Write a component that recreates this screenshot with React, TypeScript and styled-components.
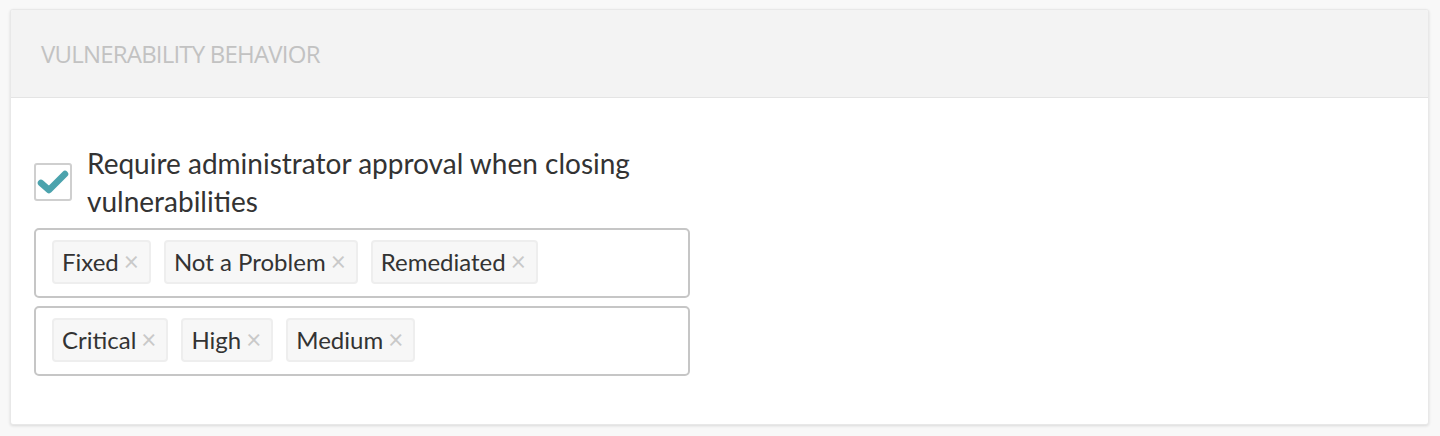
import React from "react";
import styled, { createGlobalStyle } from "styled-components";

const Global = createGlobalStyle`
  html, body { margin: 0; padding: 0; background: #f8f8f8; }
  body { font-family: Lato, "Open Sans", sans-serif; }
`;

const Page = styled.div`
  padding: 9px 11px 12px 10px;
`;

const Card = styled.section`
  background: #fff;
  border: 1px solid #e8e8e8;
  border-radius: 3px;
  box-shadow: 0 1px 3px rgba(0, 0, 0, 0.12);
  overflow: hidden;
`;

const Header = styled.header`
  height: 87px;
  background: #f3f3f3;
  border-bottom: 1px solid #e4e4e4;
  display: flex;
  align-items: center;
  padding-left: 30px;
`;

const Title = styled.h2`
  margin: 0;
  font-family: "Open Sans", Roboto, sans-serif;
  font-stretch: normal;
  font-weight: 400;
  font-size: 24px;
  color: #c2c2c2;
  letter-spacing: -0.8px;
`;

const Body = styled.div`
  padding: 46px 24px 48px 23px;
  width: 656px;
  display: flex;
  flex-direction: column;
  gap: 8px;
`;

const CheckRow = styled.label`
  display: flex;
  align-items: center;
  gap: 15px;
`;

const Box = styled.span`
  flex: none;
  width: 34px;
  height: 34px;
  border: 2px solid #cfcfcf;
  border-radius: 3px;
  display: flex;
  align-items: center;
  justify-content: center;
  background: #fff;
`;

const LabelText = styled.span`
  font-size: 28px;
  line-height: 38px;
  color: #333;
  width: 580px;
`;

const TagBox = styled.div`
  border: 2px solid #c6c6c6;
  border-radius: 5px;
  padding: 10px 16px 12px;
  display: flex;
  flex-wrap: wrap;
  gap: 13px;
`;

const Tag = styled.span`
  display: inline-flex;
  align-items: center;
  height: 40px;
  padding: 0 10px 2px 8px;
  box-sizing: content-box;
  height: 38px;
  background: #f7f7f7;
  border: 2px solid #eeeeee;
  border-radius: 4px;
  font-size: 24px;
  color: #333;
`;

const Close = styled.span`
  margin-left: 5px;
  color: #c9c9c9;
  font-size: 26px;
  line-height: 1;
`;

const Check = () => (
  <svg width="32" height="26" viewBox="0 0 32 26">
    <path
      d="M4 14 L12 21 L28 5"
      fill="none"
      stroke="#4ba3ad"
      strokeWidth="6.5"
      strokeLinecap="round"
      strokeLinejoin="round"
    />
  </svg>
);

const statuses = ["Fixed", "Not a Problem", "Remediated"];
const severities = ["Critical", "High", "Medium"];

export default function App() {
  return (
    <>
      <Global />
      <Page>
        <Card>
          <Header>
            <Title>VULNERABILITY BEHAVIOR</Title>
          </Header>
          <Body>
            <CheckRow>
              <Box>
                <Check />
              </Box>
              <LabelText>
                Require administrator approval when closing vulnerabilities
              </LabelText>
            </CheckRow>
            <TagBox>
              {statuses.map((s) => (
                <Tag key={s}>
                  {s}
                  <Close>×</Close>
                </Tag>
              ))}
            </TagBox>
            <TagBox>
              {severities.map((s) => (
                <Tag key={s}>
                  {s}
                  <Close>×</Close>
                </Tag>
              ))}
            </TagBox>
          </Body>
        </Card>
      </Page>
    </>
  );
}
